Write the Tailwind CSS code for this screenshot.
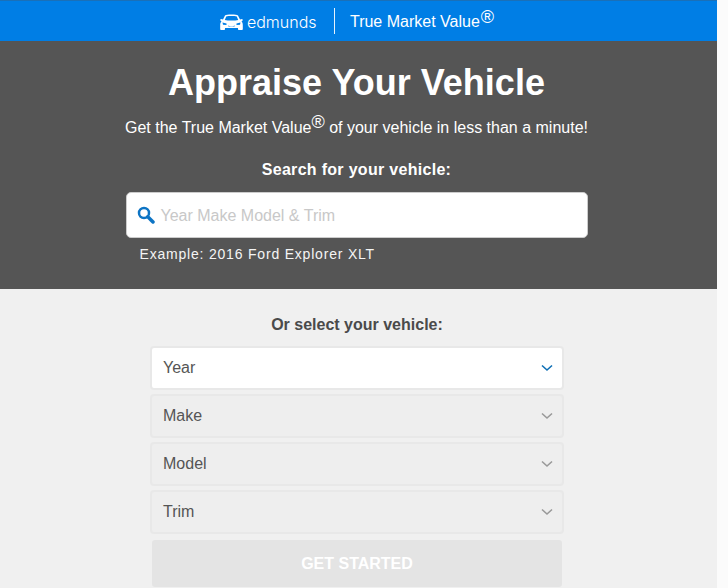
<!DOCTYPE html>
<html lang="en">
<head>
  <meta charset="UTF-8" />
  <title>Appraise Your Vehicle</title>
  <script src="https://cdn.jsdelivr.net/npm/@tailwindcss/browser@4"></script>
</head>
<body class="bg-[#fbfbfb] font-['Liberation_Sans',Arial,sans-serif] overflow-hidden">
  <div class="w-[717px] h-[588px] overflow-hidden bg-[#f0f0f0]">
    <!-- Top bar -->
    <header class="h-[41px] bg-[#007ee5] border-t border-[#1a70b8] flex items-center justify-center pr-[4px] text-white">
      <div class="flex items-center h-[26px]">
        <svg class="w-[23px] h-[16px] mr-[4px] ml-px mt-px" viewBox="0 0 23 16" fill="#fff">
          <path d="M5 1.5 C6 .8 8 .5 11.500 .5 C15 .5 17 .8 18 1.500 L20 5.500 L22 5 L23 6 L21.500 7.500 C22.500 8.500 22.800 9.500 22.800 11 V15 C22.800 15.700 22.300 16 21.800 16 H19 C18.400 16 18 15.600 18 15 V14 H5 V15 C5 15.600 4.600 16 4 16 H1.200 C.7 16 .2 15.700 .2 15 V11 C.2 9.500 .5 8.500 1.500 7.500 L0 6 L1 5 L3 5.500 Z"/>
          <path d="M6.200 2.500 C7.500 2 9.500 2 11.500 2 C13.500 2 15.500 2 16.800 2.500 L18.200 6 C15 6.800 8 6.800 4.800 6 Z" fill="#007ee5"/>
          <path d="M2.500 8.500 L6.500 9.500 L6.500 11 L3 10.800 Z M20.500 8.500 L16.500 9.500 L16.500 11 L20 10.800 Z M8 11.500 C9.500 12.500 13.500 12.500 15 11.500 L14.500 12.500 H8.500 Z" fill="#007ee5"/>
        </svg>
        <span class="text-[16px] leading-none font-['Inter',sans-serif] font-light w-[70px] pt-px">edmunds</span>
        <span class="w-px h-[26px] bg-white/90 ml-[17px] mr-[15px]"></span>
        <span class="text-[16px] leading-none pt-[2px]">True Market Value<span class="text-[18px] leading-[0] align-[4px] ml-px">®</span></span>
      </div>
    </header>

    <!-- Search section -->
    <section class="h-[248px] bg-[#555555] text-white flex flex-col items-center pr-[4px]">
      <h1 class="text-[36px] leading-[42px] font-bold mt-[21px]">Appraise Your Vehicle</h1>
      <p class="text-[16px] leading-[20px] mt-[14px]">Get the True Market Value<span class="text-[18px] leading-[0] align-[5px]">®</span> of your vehicle in less than a minute!</p>
      <p class="text-[16px] leading-[20px] font-bold mt-[22px] tracking-[0.3px]">Search for your vehicle:</p>
      <div class="w-[462px] h-[46px] mt-[12px] bg-white rounded-[5px] border border-[#cccccc] flex items-center pl-[10px]">
        <svg class="w-[18px] h-[18px] mr-[6px]" viewBox="0 0 18 18" fill="none" stroke="#0d74c4">
          <circle cx="7" cy="7" r="5" stroke-width="2.500"/>
          <path d="M10.800 10.800 L16 16" stroke-width="3.500" stroke-linecap="round"/>
        </svg>
        <span class="text-[16px] text-[#c8c8c8] pt-px">Year Make Model &amp; Trim</span>
      </div>
      <p class="w-[462px] pl-[14px] text-[14px] leading-[18px] mt-[7px] tracking-[0.8px] text-[#f4f4f4]">Example: 2016 Ford Explorer XLT</p>
    </section>

    <!-- Dropdowns -->
    <section class="flex flex-col items-center pr-[3px]">
      <p class="text-[16px] leading-[20px] font-bold text-[#4a4a4a] mt-[26px] mb-[11px]">Or select your vehicle:</p>
      <div class="w-[414px] flex flex-col gap-[4px]">
        <div class="h-[44px] bg-white border-2 border-[#e8e8e8] rounded-[4px] flex items-center justify-between pl-[11px] pr-[9px] text-[16px] text-[#555]">
          <span>Year</span>
          <svg class="w-[12px] h-[8px]" viewBox="0 0 12 8" fill="none" stroke="#0f6fb5" stroke-width="1.600"><path d="M1 1.500 L6 6 L11 1.500"/></svg>
        </div>
        <div class="h-[44px] bg-[#eeeeee] border-2 border-[#e8e8e8] rounded-[4px] flex items-center justify-between pl-[11px] pr-[9px] text-[16px] text-[#555]">
          <span>Make</span>
          <svg class="w-[12px] h-[8px]" viewBox="0 0 12 8" fill="none" stroke="#999" stroke-width="1.600"><path d="M1 1.500 L6 6 L11 1.500"/></svg>
        </div>
        <div class="h-[44px] bg-[#eeeeee] border-2 border-[#e8e8e8] rounded-[4px] flex items-center justify-between pl-[11px] pr-[9px] text-[16px] text-[#555]">
          <span>Model</span>
          <svg class="w-[12px] h-[8px]" viewBox="0 0 12 8" fill="none" stroke="#999" stroke-width="1.600"><path d="M1 1.500 L6 6 L11 1.500"/></svg>
        </div>
        <div class="h-[44px] bg-[#eeeeee] border-2 border-[#e8e8e8] rounded-[4px] flex items-center justify-between pl-[11px] pr-[9px] text-[16px] text-[#555]">
          <span>Trim</span>
          <svg class="w-[12px] h-[8px]" viewBox="0 0 12 8" fill="none" stroke="#999" stroke-width="1.600"><path d="M1 1.500 L6 6 L11 1.500"/></svg>
        </div>
        <button class="h-[47px] mt-[2px] mx-[2px] bg-[#e4e4e4] rounded-[3px] text-white font-bold text-[16px]">GET STARTED</button>
      </div>
    </section>
  </div>
</body>
</html>
